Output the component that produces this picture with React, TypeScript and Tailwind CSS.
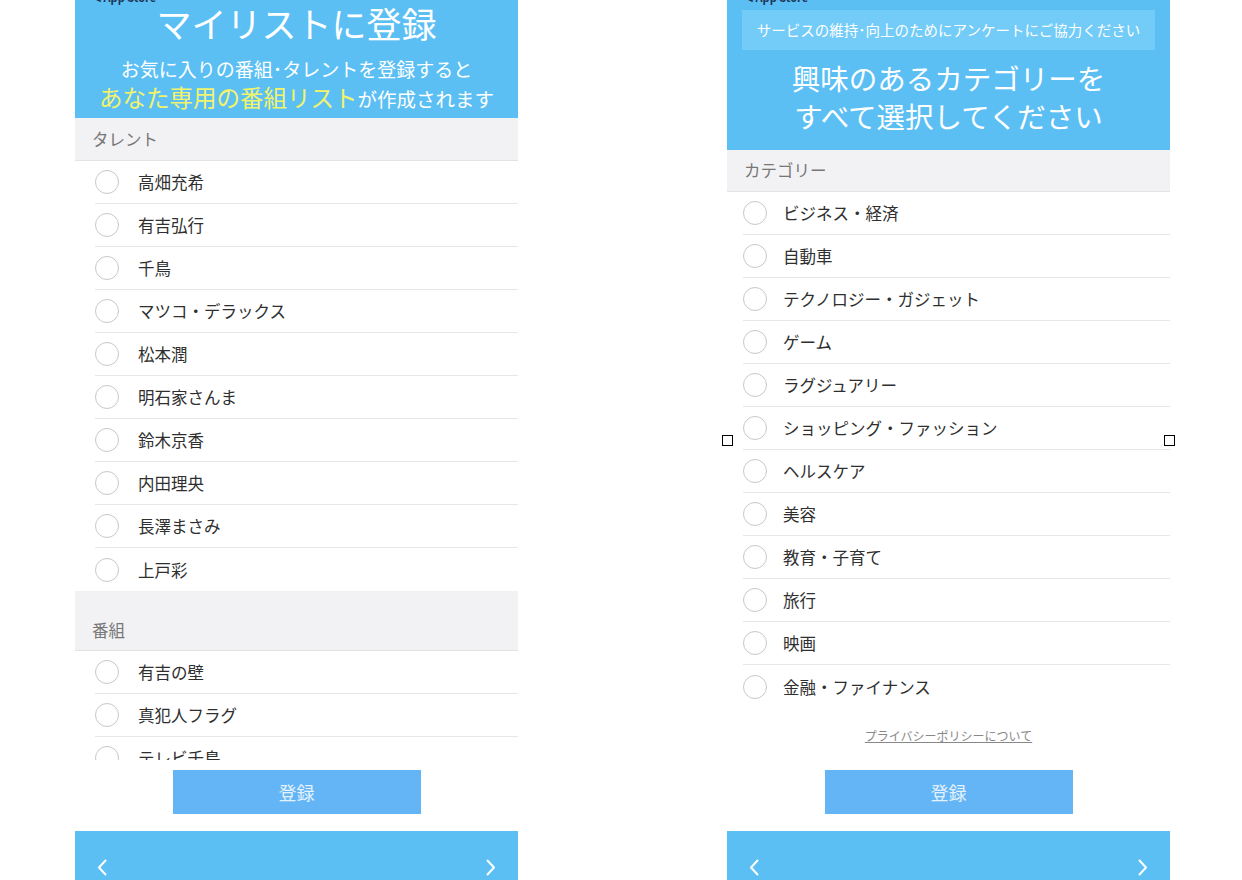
const talents = ["高畑充希", "有吉弘行", "千鳥", "マツコ・デラックス", "松本潤", "明石家さんま", "鈴木京香", "内田理央", "長澤まさみ", "上戸彩"];
const programs = ["有吉の壁", "真犯人フラグ", "テレビ千鳥"];
const categories = [
  "ビジネス・経済",
  "自動車",
  "テクノロジー・ガジェット",
  "ゲーム",
  "ラグジュアリー",
  "ショッピング・ファッション",
  "ヘルスケア",
  "美容",
  "教育・子育て",
  "旅行",
  "映画",
  "金融・ファイナンス",
];

const font = { fontFamily: '"Noto Sans CJK JP", "Noto Sans", sans-serif' };

function Row({ label, radioPad, textGap, divider = true }: { label: string; radioPad: string; textGap: string; divider?: boolean }) {
  return (
    <div className={`flex h-[43px] items-center ${radioPad}`}>
      <div className={`flex h-full flex-1 items-center ${divider ? "border-b border-[#e6e6e6]" : ""}`}>
        <span className="h-[24px] w-[24px] shrink-0 rounded-full border-[1.5px] border-[#c8c8c8] bg-white" />
        <span className={`${textGap} text-[16.5px] leading-[22px] text-[#2f2f2f]`}>{label}</span>
      </div>
    </div>
  );
}

function BackLine() {
  return (
    <div className="-mt-[9px] h-[12px] pl-[20px] text-left text-[11px] font-semibold leading-[12px] text-[#1d3557]">◂ App Store</div>
  );
}

function Footer() {
  return (
    <>
      <div className="flex justify-center">
        <button className="h-[44px] w-[248px] bg-[#63b5f5] text-[18px] text-[#e3f2fd]">登録</button>
      </div>
      <div className="mt-[17px] flex h-[60px] items-start justify-between bg-[#5bbff4] px-[22px] pt-[28px]">
        <svg width="10" height="17" viewBox="0 0 10 17" fill="none">
          <path d="M8.5 1.5 L2 8.5 L8.5 15.5" stroke="white" strokeWidth="2" strokeLinecap="round" strokeLinejoin="round" />
        </svg>
        <svg width="10" height="17" viewBox="0 0 10 17" fill="none">
          <path d="M1.5 1.5 L8 8.5 L1.5 15.5" stroke="white" strokeWidth="2" strokeLinecap="round" strokeLinejoin="round" />
        </svg>
      </div>
    </>
  );
}

export default function App() {
  return (
    <div className="flex h-[880px] w-[1242px] items-start gap-[209px] overflow-hidden bg-white pl-[75px]" style={font}>
      {/* left phone */}
      <div className="w-[443px] shrink-0">
        <div className="flow-root h-[118px] bg-[#5bbff4] text-center text-white">
          <BackLine />
          <div className="text-[35px] leading-[40px]">マイリストに登録</div>
          <div className="mt-[12px] whitespace-nowrap text-[19px] leading-[28px]">お気に入りの番組･タレントを登録すると</div>
          <div className="whitespace-nowrap leading-[28px]">
            <span className="text-[23.5px] text-[#f2f36c]">あなた専用の番組リスト</span>
            <span className="text-[19.5px]">が作成されます</span>
          </div>
        </div>
        <div className="h-[642px] overflow-hidden">
          <div className="flex h-[43px] items-center border-b border-[#e3e3e3] bg-[#f2f2f4] pl-[17px] text-[16.5px] text-[#777]">タレント</div>
          {talents.map((t, i) => (
            <Row key={t} label={t} radioPad="pl-[20px]" textGap="ml-[19px]" divider={i < talents.length - 1} />
          ))}
          <div className="flex h-[60px] items-end border-b border-[#e3e3e3] bg-[#f2f2f4] pb-[9px] pl-[17px] text-[16.5px] leading-[22px] text-[#777]">番組</div>
          {programs.map((t) => (
            <Row key={t} label={t} radioPad="pl-[20px]" textGap="ml-[19px]" />
          ))}
        </div>
        <div className="mt-[10px]">
          <Footer />
        </div>
      </div>

      {/* right phone */}
      <div className="relative w-[443px] shrink-0">
        <div className="flow-root h-[150px] bg-[#5bbff4] text-white">
          <BackLine />
          <div className="mx-[15px] mt-[7px] flex h-[40px] items-center justify-center whitespace-nowrap bg-[#73cbf7] text-[14.5px]">サービスの維持･向上のためにアンケートにご協力ください</div>
          <div className="mt-[9px] text-center text-[28.5px] leading-[38px]">
            興味のあるカテゴリーを
            <br />
            すべて選択してください
          </div>
        </div>
        <div className="flex h-[42px] items-center border-b border-[#e3e3e3] bg-[#f2f2f4] pl-[17px] text-[16.5px] text-[#777]">カテゴリー</div>
        {categories.map((c, i) => (
          <Row key={c} label={c} radioPad="pl-[16px]" textGap="ml-[16px]" divider={i < categories.length - 1} />
        ))}
        <div className="mt-[20px] text-center text-[12px] leading-[16px] text-[#888] underline">プライバシーポリシーについて</div>
        <div className="mt-[26px]">
          <Footer />
        </div>
        <span className="absolute left-[-5px] top-[435px] h-[11px] w-[11px] border border-black bg-white" />
        <span className="absolute right-[-5px] top-[435px] h-[11px] w-[11px] border border-black bg-white" />
      </div>
    </div>
  );
}
